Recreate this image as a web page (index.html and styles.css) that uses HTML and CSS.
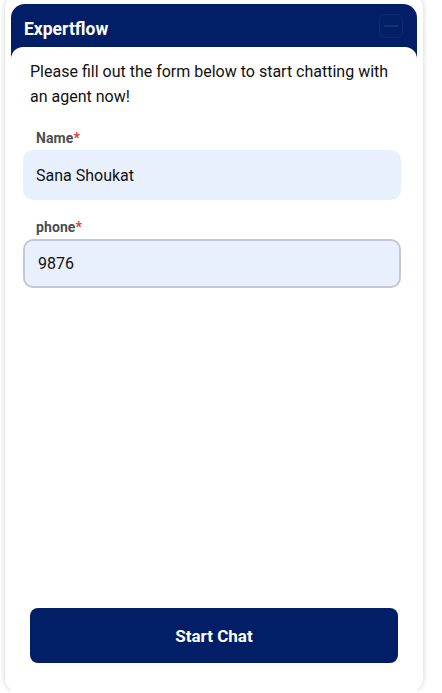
FILE: index.html
```html
<!DOCTYPE html>
<html lang="en">
<head>
  <meta charset="UTF-8">
  <meta name="viewport" content="width=device-width, initial-scale=1.0">
  <title>Expertflow Chat</title>
  <link rel="stylesheet" href="styles.css">
</head>
<body>
  <div class="widget">
    <div class="widget-header">
      <span class="widget-title">Expertflow</span>
      <button class="minimize-btn" aria-label="Minimize"><span></span></button>
    </div>

    <div class="widget-body">
      <p class="intro">Please fill out the form below to start chatting with an agent now!</p>

      <div class="field">
        <label for="name">Name<span class="req">*</span></label>
        <input type="text" id="name" class="filled" value="Sana Shoukat">
      </div>

      <div class="field">
        <label for="phone">phone<span class="req">*</span></label>
        <input type="text" id="phone" class="filled focused" value="9876">
      </div>

      <button class="start-btn">Start Chat</button>
    </div>
  </div>
</body>
</html>
```

FILE: styles.css
```css
body {
  margin: 0;
  background: #ffffff;
  font-family: Roboto, "Noto Sans", Arial, sans-serif;
}
.widget {
  margin: -6px 19px 0 5px;
  height: 698px;
  background: #ffffff;
  border-radius: 14px;
  box-shadow: 0 0 6px rgba(0,0,0,0.18);
  display: flex;
  flex-direction: column;
  box-sizing: border-box;
  padding: 10px 6px 0;
}
.widget-header {
  background: #021e66;
  border-radius: 14px 14px 0 0;
  height: 56px;
  display: flex;
  justify-content: space-between;
  padding: 0 14px 0 13px;
  align-items: flex-start;
}
.widget-title {
  color: #ffffff;
  font-size: 17.5px;
  font-weight: 700;
  margin-top: 15px;
}
.minimize-btn {
  width: 24px;
  height: 24px;
  margin-top: 10px;
  background: transparent;
  border: 1px solid #0d2a70;
  border-radius: 6px;
  padding: 0;
  display: flex;
  align-items: center;
  justify-content: center;
}
.minimize-btn span {
  width: 14px;
  height: 2px;
  background: #15336f;
}
.widget-body {
  flex: 1;
  background: #ffffff;
  margin-top: -13px;
  border-radius: 12px 12px 0 0;
  padding: 12px 16px 0 12px;
  display: flex;
  flex-direction: column;
}
.intro {
  margin: 0 0 19px 7px;
  font-size: 16px;
  line-height: 25px;
  color: #111111;
}
.field {
  margin-bottom: 17px;
}
.field label {
  display: block;
  margin: 0 0 2px 13px;
  font-size: 14px;
  line-height: 20px;
  font-weight: 700;
  color: #4d4d4d;
  letter-spacing: 0.1px;
}
.req {
  color: #e53935;
}
.field input {
  display: block;
  width: 100%;
  box-sizing: border-box;
  height: 50px;
  padding: 0 13px;
  font-family: inherit;
  font-size: 16px;
  color: #111111;
  background: #e8f0fe;
  border: none;
  border-radius: 10px;
  outline: none;
}
.field input.focused {
  height: 49px;
  border: 2px solid #c3c8d4;
  padding: 0 13px;
}
.start-btn {
  margin: auto 3px 29px 7px;
  height: 55px;
  background: #021e66;
  color: #ffffff;
  border: none;
  border-radius: 8px;
  font-family: inherit;
  font-size: 17px;
  font-weight: 700;
  cursor: pointer;
}
```
